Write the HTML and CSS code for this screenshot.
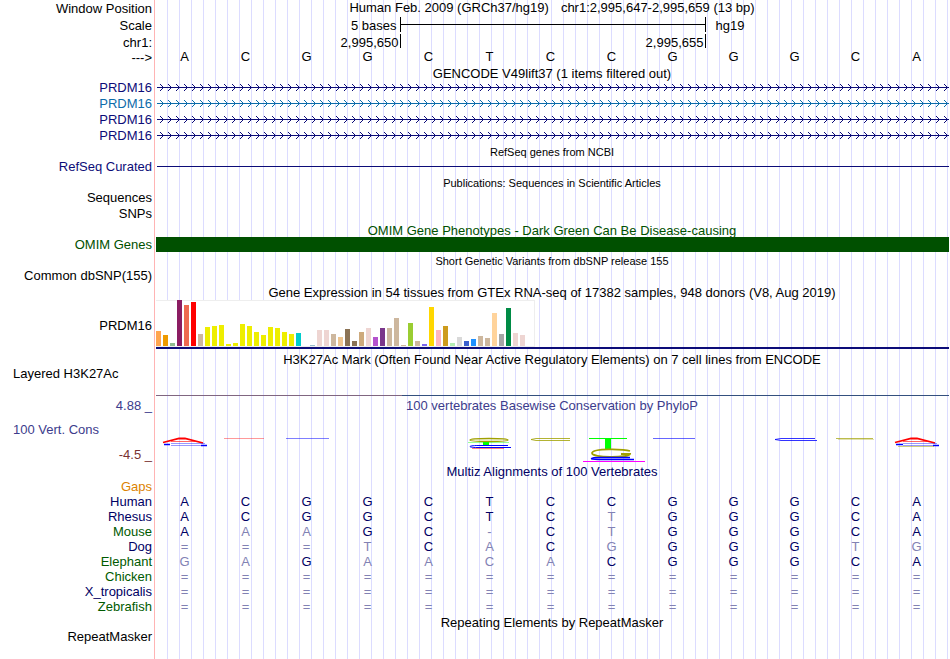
FILE: index.html
```html
<!DOCTYPE html>
<html lang="en">
<head>
  <meta charset="UTF-8">
  <meta name="viewport" content="width=device-width, initial-scale=1">
  <title>Human chr1:2,995,647-2,995,659</title>
  <link rel="stylesheet" href="styles.css">
</head>
<body>

  <main class="browser">

    <!-- ruler -->
    <div class="row ruler">
      <div class="label">Window Position</div>
      <div class="position"><span>Human Feb. 2009 (GRCh37/hg19)</span><span>chr1:2,995,647-2,995,659 (13 bp)</span></div>
    </div>
    <div class="row ruler">
      <div class="label">Scale</div>
      <div class="scale"><span class="scale-name">5 bases</span><span class="scale-bar"></span><span class="assembly">hg19</span></div>
    </div>
    <div class="row coords">
      <div class="label">chr1:</div>
      <div class="scale"><span class="coord">2,995,650</span><span class="coord next">2,995,655</span></div>
    </div>
    <div class="row bases-row">
      <div class="label">---&gt;</div>
      <div class="bases"><span>A</span><span>C</span><span>G</span><span>G</span><span>C</span><span>T</span><span>C</span><span>C</span><span>G</span><span>G</span><span>G</span><span>C</span><span>A</span></div>
    </div>

    <!-- genes -->
    <div class="title">GENCODE V49lift37 (1 items filtered out)</div>
    <div class="row navy">
      <div class="label">PRDM16</div>
      <svg class="gene"><defs><pattern id="arrows" width="8" height="16" patternUnits="userSpaceOnUse"><path d="M3 4h1v1h-1zM4 5h1v1h-1zM5 6h1v3h-1zM4 9h1v1h-1zM3 10h1v1h-1z" fill="#0c0c78"/></pattern></defs><rect width="100%" height="16" fill="url(#arrows)"/><rect y="7" width="100%" height="1" fill="#0c0c78"/></svg>
    </div>
    <div class="row blue">
      <div class="label">PRDM16</div>
      <svg class="gene"><defs><pattern id="arrows-blue" width="8" height="16" patternUnits="userSpaceOnUse"><path d="M3 4h1v1h-1zM4 5h1v1h-1zM5 6h1v3h-1zM4 9h1v1h-1zM3 10h1v1h-1z" fill="#0c6caa"/></pattern></defs><rect width="100%" height="16" fill="url(#arrows-blue)"/><rect y="7" width="100%" height="1" fill="#0c6caa"/></svg>
    </div>
    <div class="row navy">
      <div class="label">PRDM16</div>
      <svg class="gene"><rect width="100%" height="16" fill="url(#arrows)"/><rect y="7" width="100%" height="1" fill="#0c0c78"/></svg>
    </div>
    <div class="row navy">
      <div class="label">PRDM16</div>
      <svg class="gene"><rect width="100%" height="16" fill="url(#arrows)"/><rect y="7" width="100%" height="1" fill="#0c0c78"/></svg>
    </div>

    <div class="title small">RefSeq genes from NCBI</div>
    <div class="row navy">
      <div class="label">RefSeq Curated</div>
      <svg class="gene"><rect y="7" width="100%" height="1" fill="#0c0c78"/></svg>
    </div>

    <div class="title small">Publications: Sequences in Scientific Articles</div>
    <div class="row"><div class="label">Sequences</div></div>
    <div class="row"><div class="label">SNPs</div></div>

    <div class="title green">OMIM Gene Phenotypes - Dark Green Can Be Disease-causing</div>
    <div class="row omim green">
      <div class="label">OMIM Genes</div>
      <div class="omim-bar"></div>
    </div>

    <div class="title small snp-title">Short Genetic Variants from dbSNP release 155</div>
    <div class="row"><div class="label">Common dbSNP(155)</div></div>

    <!-- expression -->
    <div class="title gtex-title">Gene Expression in 54 tissues from GTEx RNA-seq of 17382 samples, 948 donors (V8, Aug 2019)</div>
    <div class="row gtex">
      <div class="label">PRDM16</div>
      <div class="expression"><div class="bars" id="bars"></div></div>
    </div>

    <div class="title h3k-title">H3K27Ac Mark (Often Found Near Active Regulatory Elements) on 7 cell lines from ENCODE</div>
    <div class="row h3k">
      <div class="label left">Layered H3K27Ac</div>
      <div class="h3k-line"></div>
    </div>

    <!-- conservation -->
    <div class="row cons-head violet">
      <div class="label">4.88 _</div>
      <div class="cons-name">100 vertebrates Basewise Conservation by PhyloP</div>
    </div>
    <div class="row cons violet">
      <div class="cons-labels">
        <div class="label left">100 Vert. Cons</div>
        <div class="label maroon">-4.5 _</div>
      </div>
      <svg class="logo" viewBox="156 413 793 50" preserveAspectRatio="none" fill="none">
        <path d="M163 442.500L179 438.500h6L203 443" stroke="#f00" stroke-width="1.800"/>
        <path d="M171 441.500h24" stroke="#f00" opacity=".6"/>
        <path d="M205 443.500h-34M171 445.500h34" stroke="#00f" opacity=".4"/>
        <path d="M164 444.500h6M201 445.500h6" stroke="#00f" stroke-width="1.500"/>

        <path d="M224 438.500h40" stroke="#f00" opacity=".4"/>
        <path d="M286 438.500h43" stroke="#00f" opacity=".5"/>

        <path d="M508 440c0-2-38-2-38 0s38 2 38 0" stroke="#a0a000" stroke-width="1.300"/>
        <path d="M468 442.500h41" stroke="#0f0" opacity=".4"/>
        <path d="M483 442h6v3h-6z" fill="#0f0"/>
        <path d="M508 445.500h-30c-10 0-11 2-1 2h34" stroke="#00f"/>
        <path d="M472 448.500h32" stroke="#f00" opacity=".5"/>

        <path d="M570 438.500h-34l-5 1 5 1h34" stroke="#a0a000" opacity=".8"/>

        <path d="M589 438h38v1h-16v10h-6v-10h-16z" fill="#0f0"/>
        <path d="M630 451c-6-2-37-3-38 2s37 5 38 1h-9" stroke="#a0a000" stroke-width="1.800"/>
        <path d="M630 457.500h-30c-10 0-12 2-2 2h36" stroke="#00f" stroke-width="1.300"/>
        <path d="M583 461.500h62" stroke="#f0f"/>

        <path d="M653 438.500h42" stroke="#00f" opacity=".6"/>

        <path d="M815 438.500h-34l-6 1 6 1h36" stroke="#00f" opacity=".8"/>
        <path d="M836 438.500h37" stroke="#a0a000" opacity=".7"/>
        <path d="M838 439.500h36" stroke="#a0a000" opacity=".3"/>

        <path d="M895 442.500L911 438.500h6L935 443" stroke="#f00" stroke-width="1.800"/>
        <path d="M903 441.500h24" stroke="#f00" opacity=".6"/>
        <path d="M937 443.500h-34M903 445.500h34" stroke="#00f" opacity=".4"/>
        <path d="M896 444.500h7M933 445.500h6" stroke="#00f" stroke-width="1.500"/>
        <path d="M898 446.500h36" stroke="#a0a000" opacity=".5"/>
      </svg>
    </div>

    <!-- alignments -->
    <div class="title multiz">Multiz Alignments of 100 Vertebrates</div>
    <table class="align" id="align">
      <tr class="gaps"><th scope="row">Gaps</th><td colspan="13"></td></tr>
    </table>

    <div class="title">Repeating Elements by RepeatMasker</div>
    <div class="row"><div class="label">RepeatMasker</div></div>
  </main>

  <script src="tracks.js"></script>
</body>
</html>
```
FILE: styles.css
```css
body {
  margin: 0;
  background: #fff;
  color: #000;
  font-family: "Liberation Sans", Arial, sans-serif;
  font-size: 13px;
  line-height: 16px;
}
.browser {
  box-sizing: border-box;
  min-height: 100vh;
  margin-right: 1px;
  padding-bottom: 14px;
  /* red divider after the labels, then a guide line every 12px */
  background:
    linear-gradient(#ffb4b4, #ffb4b4) 154px 0 / 1px 100% no-repeat,
    linear-gradient(#fff, #fff) 0 0 / 156px 100% no-repeat,
    repeating-linear-gradient(to right, transparent 0 11px, #dcdcff 11px 12px) 156px 0;
}
.row {
  display: grid;
  grid-template-columns: 154px 1fr;
  grid-template-rows: 100%;
  height: 16px;
}
.label {
  padding-right: 2px;
  text-align: right;
  white-space: nowrap;
}
.label.left {
  padding-left: 13px;
  text-align: left;
}
.title {
  height: 15px;
  margin-left: 155px;
  line-height: 18px;
  text-align: center;
  white-space: nowrap;
}
.small {
  font-size: 11px;
  line-height: 16px;
}
.navy { color: #0c0c78; }
.blue { color: #0c6caa; }
.green { color: #005000; }
.violet { color: #3c3c8c; }
.maroon { color: #783232; }

/* ruler */
.ruler {
  height: 17px;
  line-height: 17px;
}
.position {
  display: flex;
  justify-content: center;
  gap: 12px;
  margin-left: 1px;
  line-height: 16px;
}
.scale { display: flex; }
.scale-name,
.scale-bar,
.coord {
  box-sizing: border-box;
}
.scale-name {
  width: 31%;
  padding-right: 4px;
  text-align: right;
}
.scale-bar {
  width: 306px;
  height: 15px;
  border: solid #000;
  border-width: 0 1px;
  background: linear-gradient(#000, #000) 0 7px / 100% 1px no-repeat;
}
.assembly { padding-left: 9px; }
.coords {
  height: 15px;
  line-height: 17px;
}
.coord {
  width: calc(31% + 1px);
  height: 14px;
  padding-right: 2px;
  border-right: 1px solid #000;
  text-align: right;
}
.coord.next { width: 305px; }
.bases-row .label { line-height: 18px; }
.bases {
  display: grid;
  grid-template-columns: repeat(13, 1fr);
  margin-right: 2px;
  text-align: center;
}

/* genes */
.gene {
  width: calc(100% - 3px);
  height: 16px;
  margin-left: 3px;
}
.omim { height: 15px; }
.omim-bar {
  margin-left: 2px;
  background: #005000;
}
.snp-title {
  height: 16px;
  line-height: 18px;
}

/* expression */
.gtex-title { height: 16px; }
.gtex {
  height: 49px;
  line-height: 51px;
}
.expression {
  margin-left: 2px;
  border-bottom: 2px solid #0c0c78;
}
.bars {
  display: flex;
  align-items: flex-end;
  gap: 2px;
  box-sizing: border-box;
  width: 379px;
  height: 47px;
  border: 1px solid #eee;
  border-left: 0;
  background: #fff;
}
.bars span { width: 5px; }
.h3k-title {
  height: 14px;
  padding-top: 3px;
  line-height: 16px;
}
.h3k { height: 30px; }
.h3k-line {
  margin-left: 2px;
  background: linear-gradient(to right, #806680 31%, #34507e 31%) bottom / 100% 1px no-repeat;
}

/* conservation */
.cons-head {
  height: 15px;
  padding-top: 2px;
}
.cons-name {
  margin-left: 1px;
  text-align: center;
}
.cons { height: 50px; }
.cons-labels {
  display: flex;
  flex-direction: column;
  justify-content: space-between;
  padding-top: 9px;
}
.logo {
  width: calc(100% - 2px);
  height: 50px;
  margin-left: 2px;
}

/* alignments */
.multiz {
  height: 16px;
  color: #000064;
}
.align {
  width: calc(100% - 2px);
  border-collapse: collapse;
  table-layout: fixed;
}
.align th,
.align td {
  height: 15px;
  padding: 0;
  line-height: 15px;
  text-align: center;
}
.align th {
  width: 152px;
  padding-right: 2px;
  font-weight: normal;
  text-align: right;
}
.align td { color: #000064; }
.align .near th { color: #000064; }
.align .far th { color: #005a00; }
.align .gaps th { color: #dc8200; }
.align td.diff { color: #8282b4; }
```
FILE: tracks.js
```js
// [colour, height] for each tissue
const tissues = [
  ["#ffa54f", 15], ["#ee9a00", 11], ["#8fbc8f", 3], ["#8b1c62", 46], ["#ee6a50", 41],
  ["#ff0000", 44], ["#cdb79e", 12], ["#eeee00", 19], ["#eeee00", 20], ["#eeee00", 21],
  ["#eeee00", 2], ["#eeee00", 3], ["#eeee00", 22], ["#eeee00", 20], ["#eeee00", 14],
  ["#eeee00", 11], ["#eeee00", 19], ["#eeee00", 18], ["#eeee00", 14], ["#eeee00", 12],
  ["#00cdcd", 13], ["#ee82ee", 0], ["#9ac0cd", 1], ["#eed5d2", 16], ["#eed5d2", 16],
  ["#cdb79e", 12], ["#eec591", 9], ["#8b7355", 17], ["#8b7355", 5], ["#cdaa7d", 14],
  ["#eed5d2", 18], ["#b452cd", 9], ["#7a378b", 18], ["#cdb79e", 18], ["#cdb79e", 28],
  ["#cdb79e", 1], ["#9acd32", 23], ["#cdb79e", 5], ["#7a67ee", 2], ["#ffd700", 39],
  ["#ffb6c1", 16], ["#cd9b1d", 20], ["#b4eeb4", 3], ["#d9d9d9", 9], ["#3a5fcd", 5],
  ["#1e90ff", 7], ["#cdb79e", 10], ["#cdb79e", 8], ["#ffd39b", 33], ["#a6a6a6", 12],
  ["#008b45", 38], ["#eed5d2", 13], ["#eed5d2", 11], ["#ff00ff", 0]
];

const bars = document.getElementById("bars");
tissues.forEach(([color, height]) => {
  const bar = document.createElement("span");
  bar.style.background = color;
  bar.style.height = height + "px";
  bars.appendChild(bar);
});

// lower case = differs from human
const species = [
  ["Human", "near", "ACGGCTCCGGGCA"],
  ["Rhesus", "near", "ACGGCTCtGGGCA"],
  ["Mouse", "far", "AaaGC-CtGGGCA"],
  ["Dog", "near", "===tCaCgGGGtg"],
  ["Elephant", "far", "gaGaacaCGGGCA"],
  ["Chicken", "far", "============="],
  ["X_tropicalis", "near", "============="],
  ["Zebrafish", "far", "============="]
];

const align = document.getElementById("align");
species.forEach(([name, group, bases]) => {
  const row = align.insertRow();
  row.className = group;
  const head = document.createElement("th");
  head.scope = "row";
  head.textContent = name;
  row.appendChild(head);
  for (const base of bases) {
    const cell = row.insertCell();
    cell.textContent = base.toUpperCase();
    if (!/[A-Z]/.test(base)) cell.className = "diff";
  }
});
```
